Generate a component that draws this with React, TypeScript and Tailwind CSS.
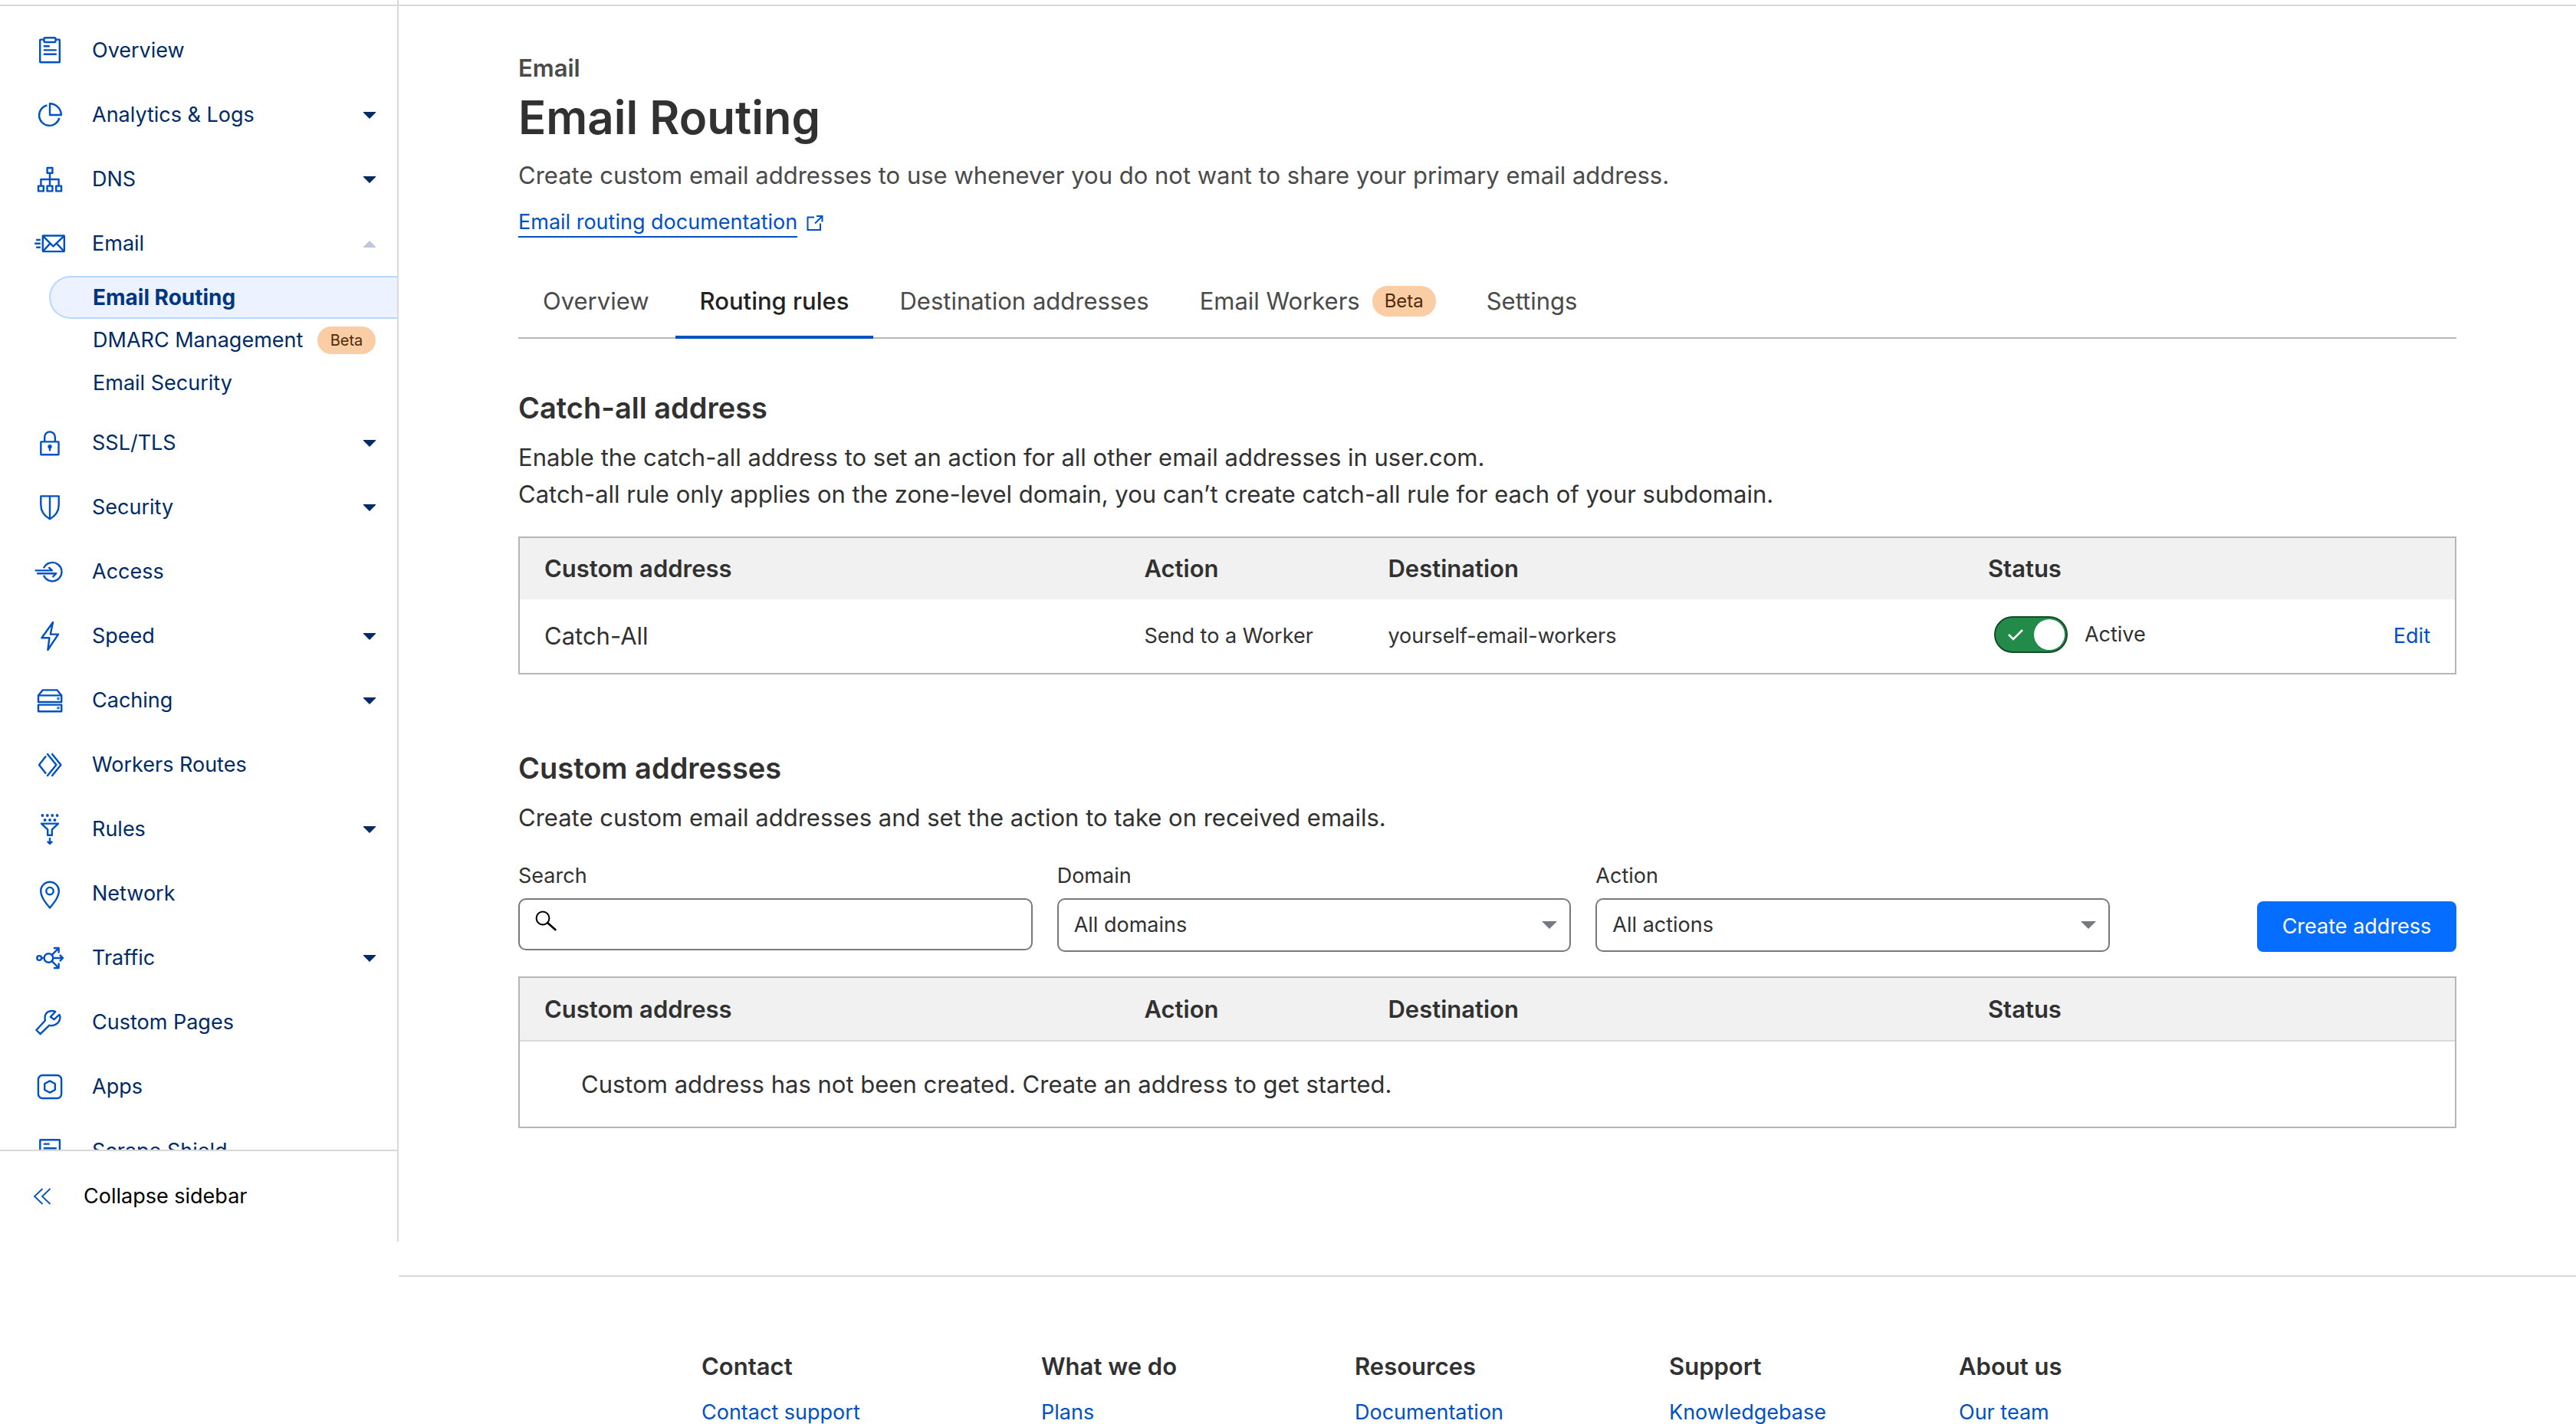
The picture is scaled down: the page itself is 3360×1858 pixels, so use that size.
import type { ReactNode } from "react";

type NavItem = {
  label: string;
  icon: ReactNode;
  caret?: "down" | "up";
  children?: { label: string; active?: boolean; beta?: boolean }[];
};

const icons = {
  overview: (
    <>
      <rect x="9.2" y="7.6" width="25.6" height="29.7" rx="0.6" />
      <rect x="14.5" y="5.2" width="15" height="5.8" rx="1.4" fill="#fff" />
      <path d="M13.8 16.3h7.9M13.8 21.4h17M13.8 26.8h17" />
    </>
  ),
  analytics: (
    <>
      <path d="M18.4 9.4A13.4 13.4 0 1 0 34.4 25.9" />
      <path d="M22 7.2V22h14.8A14.8 14.8 0 0 0 22 7.2z" />
    </>
  ),
  dns: (
    <>
      <rect x="18.6" y="7" width="6.8" height="6.8" />
      <rect x="7" y="30.6" width="6.8" height="6.8" />
      <rect x="18.6" y="30.6" width="6.8" height="6.8" />
      <rect x="30.2" y="30.6" width="6.8" height="6.8" />
      <path d="M22 13.8v16.8M10.4 30.6V22h23.2v8.6" />
    </>
  ),
  email: (
    <>
      <rect x="12.8" y="11.5" width="28" height="20.6" rx="0.5" />
      <path d="M13 11.8l13.4 13.6 14.2-13.6M13 32l9.4-10.4M40.6 32l-9.8-10.4" />
      <path d="M4.2 17h5.6M2.2 21.8h7.6M4.2 26.8h5.6" />
    </>
  ),
  lock: (
    <>
      <rect x="10.3" y="20.4" width="23.2" height="16.8" rx="0.5" />
      <path d="M15.2 20.4v-6.2a6.8 6.8 0 0 1 13.6 0v6.2" />
      <circle cx="22" cy="26.8" r="1.5" fill="currentColor" />
      <path d="M22 27v5.4" />
    </>
  ),
  shield: (
    <>
      <path d="M10.3 7.4h23.4V19c0 8-4.6 14.2-11.7 18.2C14.9 33.2 10.3 27 10.3 19z" />
      <path d="M22 7.4v29.8" />
    </>
  ),
  access: (
    <>
      <path d="M14 17.4A12.2 12.2 0 1 1 14 26.8" />
      <path d="M2.6 20.4h22.2l-4.4-4.2M5.2 24.2h25l-4.6 4.8" />
    </>
  ),
  speed: <path d="M26 4L11.4 24.2h10L19.4 40 33 19.6H22.8z" />,
  caching: (
    <>
      <path d="M7 15.4l5.6-7h19l5.6 7" />
      <rect x="7" y="15.4" width="30.2" height="8.6" />
      <rect x="7" y="27.6" width="30.2" height="8.6" />
      <circle cx="33" cy="19.6" r="0.6" />
      <circle cx="33" cy="31.8" r="0.6" />
    </>
  ),
  workers: (
    <path d="M17 10.6L8 22l9 11.4M18.4 7.2L30.4 22l-12 14.8M24.5 7.2L36.4 22l-11.9 14.8" />
  ),
  rules: (
    <>
      <g fill="currentColor" stroke="none">
        <circle cx="12.4" cy="4" r="1.9" />
        <circle cx="18.8" cy="4" r="1.9" />
        <circle cx="25.2" cy="4" r="1.9" />
        <circle cx="31.6" cy="4" r="1.9" />
        <circle cx="15.6" cy="10" r="1.9" />
        <circle cx="22" cy="10" r="1.9" />
        <circle cx="28.4" cy="10" r="1.9" />
      </g>
      <path d="M11 14.6h22l-8.2 7.8v7.4h-5.6v-7.4z" />
      <path d="M22 33v7.6M18.8 37.8l3.2 3 3.2-3" />
    </>
  ),
  network: (
    <>
      <path d="M22 40.6C16.6 34 10.2 26.4 10.2 18.6a11.8 11.8 0 0 1 23.6 0C33.8 26.4 27.4 34 22 40.6z" />
      <circle cx="22" cy="18.6" r="4.7" />
    </>
  ),
  traffic: (
    <>
      <circle cx="8.2" cy="22" r="2.9" />
      <circle cx="20.4" cy="22" r="5.8" />
      <path d="M11.2 22h3.4M26.2 22H39M35 17.8l4 4.2-4 4.2" />
      <path d="M24.8 17.8l8.8-8.8M27 9h6.6v6.4M24.8 26.2l8.8 8.8M27 35h6.6v-6.4" />
    </>
  ),
  wrench: (
    <path d="M29.3 8C24 5.6 17.2 7.6 15.8 13.5c-.6 2.6-.2 4.4.1 6L4.4 32l5.2 5.2 11.6-11.4C25 27 34 25.4 35.3 16.5c.2-1.8 0-3.4-.9-4.6l-6.8 6.3-4.8-3.4z" />
  ),
  apps: (
    <>
      <rect x="6.9" y="7" width="30.2" height="30" rx="5.5" />
      <path d="M22 14.4l6.8 3.6v8L22 29.6 15.2 26v-8z" />
    </>
  ),
  scrape: (
    <>
      <rect x="9.3" y="7.2" width="25.6" height="30" rx="0.5" />
      <path d="M13.8 12.6h7.9M13.8 18.2h17M13.8 23.8h17" />
    </>
  ),
};

const nav: NavItem[] = [
  { label: "Overview", icon: icons.overview },
  { label: "Analytics & Logs", icon: icons.analytics, caret: "down" },
  { label: "DNS", icon: icons.dns, caret: "down" },
  {
    label: "Email",
    icon: icons.email,
    caret: "up",
    children: [
      { label: "Email Routing", active: true },
      { label: "DMARC Management", beta: true },
      { label: "Email Security" },
    ],
  },
  { label: "SSL/TLS", icon: icons.lock, caret: "down" },
  { label: "Security", icon: icons.shield, caret: "down" },
  { label: "Access", icon: icons.access },
  { label: "Speed", icon: icons.speed, caret: "down" },
  { label: "Caching", icon: icons.caching, caret: "down" },
  { label: "Workers Routes", icon: icons.workers },
  { label: "Rules", icon: icons.rules, caret: "down" },
  { label: "Network", icon: icons.network },
  { label: "Traffic", icon: icons.traffic, caret: "down" },
  { label: "Custom Pages", icon: icons.wrench },
  { label: "Apps", icon: icons.apps },
  { label: "Scrape Shield", icon: icons.scrape },
];

const footer = [
  { title: "Contact", link: "Contact support" },
  { title: "What we do", link: "Plans" },
  { title: "Resources", link: "Documentation" },
  { title: "Support", link: "Knowledgebase" },
  { title: "About us", link: "Our team" },
];

function NavRow({ item }: { item: NavItem }) {
  const className = "flex h-[84px] w-full items-center pl-[43px] pr-7 text-left";
  const content = (
    <>
      <svg viewBox="0 0 44 44" className="mr-[33px] size-11 shrink-0 text-[#0051c3]" fill="none" stroke="currentColor" strokeWidth="2.4" strokeLinejoin="round" aria-hidden="true">
        {item.icon}
      </svg>
      <span className="flex-1">{item.label}</span>
      {item.caret === "down" && (
        <svg viewBox="0 0 16 9" className="h-[9px] w-4 text-[#002b66]" aria-hidden="true">
          <path d="M0 0h16v1L8 9 0 1z" fill="currentColor" />
        </svg>
      )}
      {item.caret === "up" && (
        <svg viewBox="0 0 16 9" className="h-[9px] w-4 text-[#bfc8da]" aria-hidden="true">
          <path d="M0 9h16V8L8 0 0 8z" fill="currentColor" />
        </svg>
      )}
    </>
  );
  return item.caret ? (
    <button type="button" aria-expanded={item.caret === "up"} className={className}>
      {content}
    </button>
  ) : (
    <a href="#" className={className}>
      {content}
    </a>
  );
}

function Sidebar() {
  return (
    <aside className="flex h-[calc(100vh-238px)] w-[520px] shrink-0 flex-col border-r-2 border-[#d9d9d9] text-[27px] leading-10 text-[#002b66]">
      <div className="h-2 shrink-0 border-b-2 border-[#d9d9d9]" />
      <nav className="min-h-0 flex-1 overflow-hidden pt-4" aria-label="Zone">
        <ul>
          {nav.map((item) => (
            <li key={item.label}>
              <NavRow item={item} />
              {item.children && (
                <ul className="mb-2">
                  {item.children.map((child) =>
                    child.active ? (
                      <li key={child.label} className="pl-16">
                        <a
                          href="#"
                          aria-current="page"
                          className="flex h-14 items-center rounded-l-full border-2 border-r-0 border-[#b9d6ff] bg-[#ecf2ff] pl-[55px] text-[28px] font-bold text-[#003681]"
                        >
                          {child.label}
                        </a>
                      </li>
                    ) : (
                      <li key={child.label}>
                        <a href="#" className="flex h-14 items-center justify-between pl-[121px] pr-7">
                          {child.label}
                          {child.beta && (
                            <span className="flex h-9 w-[76px] items-center justify-center rounded-full bg-[#fbcda5] text-xl text-[#4e2b0a]">
                              Beta
                            </span>
                          )}
                        </a>
                      </li>
                    ),
                  )}
                </ul>
              )}
            </li>
          ))}
        </ul>
      </nav>
      <button type="button" className="flex h-[120px] shrink-0 items-center border-t-2 border-[#d9d9d9] pl-11 text-black">
        <svg viewBox="0 0 24 24" className="mr-[41px] size-6 text-[#0051c3]" fill="none" stroke="currentColor" strokeWidth="1.8" aria-hidden="true">
          <path d="M11.5 2L1 12l10.5 10M21.5 2L11 12l10.500 10" />
        </svg>
        Collapse sidebar
      </button>
    </aside>
  );
}

const tabClass = "-mb-0.5 flex h-[94px] items-center border-b-4 border-transparent px-8";

function Tabs() {
  return (
    <div role="tablist" className="mt-[38px] flex gap-0.5 border-b-2 border-[#b6b6b6] text-[31px] leading-10 text-[#4a4a4a]">
      <button type="button" role="tab" className={tabClass}>Overview</button>
      <button type="button" role="tab" aria-selected="true" className="-mb-0.5 flex h-[94px] items-center border-b-4 border-[#0051c3] px-8 font-medium text-[#222222]">
        Routing rules
      </button>
      <button type="button" role="tab" className={tabClass}>Destination addresses</button>
      <button type="button" role="tab" className={tabClass}>
        Email Workers
        <span className="ml-4 flex h-10 w-[83px] items-center justify-center rounded-full bg-[#fbcda5] text-2xl text-[#4e2b0a]">Beta</span>
      </button>
      <button type="button" role="tab" className={tabClass}>Settings</button>
    </div>
  );
}

function TableHead({ divided }: { divided?: boolean }) {
  return (
    <>
      <colgroup>
        <col className="w-[31%]" />
        <col className="w-[12.6%]" />
        <col className="w-[31%]" />
        <col />
        <col className="w-[8%]" />
      </colgroup>
      <thead className={divided ? "border-b-2 border-[#d9d9d9] bg-[#f1f1f1]" : "bg-[#f1f1f1]"}>
        <tr className={divided ? "h-[82px] text-left" : "h-20 text-left"}>
          <th className="pl-8 font-semibold">Custom address</th>
          <th className="pl-8 font-semibold">Action</th>
          <th className="pl-8 font-semibold">Destination</th>
          <th className="pl-8 font-semibold">Status</th>
          <td />
        </tr>
      </thead>
    </>
  );
}

function SelectField({ id, label, option }: { id: string; label: string; option: string }) {
  return (
    <div className="flex flex-col gap-[9px]">
      <label htmlFor={id}>{label}</label>
      <div className="relative">
        <select id={id} className="h-[70px] w-full appearance-none rounded-[10px] border-2 border-[#797979] bg-white pl-5 pr-12">
          <option>{option}</option>
        </select>
        <svg viewBox="0 0 20 10" className="pointer-events-none absolute right-[18px] top-[30px] h-2.5 w-5" aria-hidden="true">
          <path d="M0 0h20L10 10z" fill="#747a7d" />
        </svg>
      </div>
    </div>
  );
}

export default function App() {
  return (
    <div className="flex h-screen overflow-hidden bg-white font-[Inter,'Liberation_Sans',sans-serif] text-[31px] leading-[48px] text-[#313131]">
      <Sidebar />
      <div className="min-w-0 flex-1">
        <div className="h-2 border-b-2 border-[#d9d9d9]" />
        <main className="px-[156px] pb-48 pt-[61px]">
          <p className="font-semibold leading-10 text-[#4a4a4a]">Email</p>
          <h1 className="mt-2 text-[60px] font-semibold leading-[72px]">Email Routing</h1>
          <p className="mt-4 text-[#4a4a4a]">
            Create custom email addresses to use whenever you do not want to share your primary email address.
          </p>
          <a href="#" className="mt-[19px] flex w-fit items-center text-[27px] leading-9 text-[#0051c3]">
            <span className="border-b-2 border-[#0051c3]">Email routing documentation</span>
            <svg viewBox="0 0 22 22" className="ml-3 size-[22px]" fill="none" stroke="currentColor" strokeWidth="2" aria-hidden="true">
              <path d="M10 3.5H1.500V20H18v-8.500M13 2h7.500v7.500M20.500 2L11 11.500" />
            </svg>
          </a>

          <Tabs />

          <section>
            <h2 className="mt-[66px] text-[38px] font-semibold">Catch-all address</h2>
            <p className="mt-[17px]">
              Enable the catch-all address to set an action for all other email addresses in user.com.
              <br />
              Catch-all rule only applies on the zone-level domain, you can’t create catch-all rule for each of your subdomain.
            </p>
            <div className="mt-[31px] border-2 border-[#b6b6b6]">
              <table className="w-full table-fixed">
                <TableHead />
                <tbody>
                  <tr className="h-24 text-[27px]">
                    <td className="pl-8 text-[31px]">Catch-All</td>
                    <td className="pl-8">Send to a Worker</td>
                    <td className="pl-8">yourself-email-workers</td>
                    <td className="pb-1 pl-10">
                      <label className="flex w-fit items-center gap-[22px]">
                        <span className="relative flex">
                          <input
                            type="checkbox"
                            role="switch"
                            defaultChecked
                            className="h-12 w-24 appearance-none rounded-full border-2 border-[#164a2a] bg-[#228b49]"
                          />
                          <svg viewBox="0 0 22 16" className="pointer-events-none absolute left-[17px] top-4 h-4 w-[22px]" fill="none" stroke="#fff" strokeWidth="2.5" aria-hidden="true">
                            <path d="M2 8l6 6L20 2" />
                          </svg>
                          <span className="pointer-events-none absolute right-1 top-1 size-10 rounded-full bg-white" />
                        </span>
                        Active
                      </label>
                    </td>
                    <td className="pr-8 text-right">
                      <a href="#" className="text-[#0051c3]">Edit</a>
                    </td>
                  </tr>
                </tbody>
              </table>
            </div>
          </section>

          <section>
            <h2 className="mt-[98px] text-[38px] font-semibold">Custom addresses</h2>
            <p className="mt-[17px]">Create custom email addresses and set the action to take on received emails.</p>
            <form className="mt-8 flex items-end gap-48 text-[27px] leading-10">
              <div className="grid flex-1 grid-cols-3 gap-8">
                <div className="flex flex-col gap-[9px]">
                  <label htmlFor="search">Search</label>
                  <div className="relative">
                    <input id="search" type="text" className="h-[68px] w-full rounded-[10px] border-2 border-[#797979] bg-white pl-[60px] pr-5" />
                    <svg viewBox="0 0 28 28" className="pointer-events-none absolute left-[22px] top-4 size-7" fill="none" stroke="#000" strokeWidth="2" aria-hidden="true">
                      <circle cx="10" cy="10" r="8.4" />
                      <path d="M16.2 16l11 9.800" strokeWidth="2.8" />
                    </svg>
                  </div>
                </div>
                <SelectField id="domain" label="Domain" option="All domains" />
                <SelectField id="action" label="Action" option="All actions" />
              </div>
              <button type="button" className="h-[66px] w-[260px] rounded-lg bg-[#056dff] text-white">Create address</button>
            </form>
            <div className="mt-8 border-2 border-[#b6b6b6]">
              <table className="w-full table-fixed border-collapse">
                <TableHead divided />
                <tbody>
                  <tr className="h-28">
                    <td colSpan={5} className="pl-20">
                      Custom address has not been created. Create an address to get started.
                    </td>
                  </tr>
                </tbody>
              </table>
            </div>
          </section>
        </main>

        <footer className="border-t-2 border-[#d9d9d9] px-[395px] pt-[93px]">
          <div className="grid grid-cols-[443fr_409fr_410fr_378fr_410fr]">
            {footer.map((column) => (
              <div key={column.title}>
                <h3 className="font-semibold">{column.title}</h3>
                <a href="#" className="mt-4 block text-[27px] leading-10 text-[#0051c3]">{column.link}</a>
              </div>
            ))}
          </div>
        </footer>
      </div>
    </div>
  );
}
